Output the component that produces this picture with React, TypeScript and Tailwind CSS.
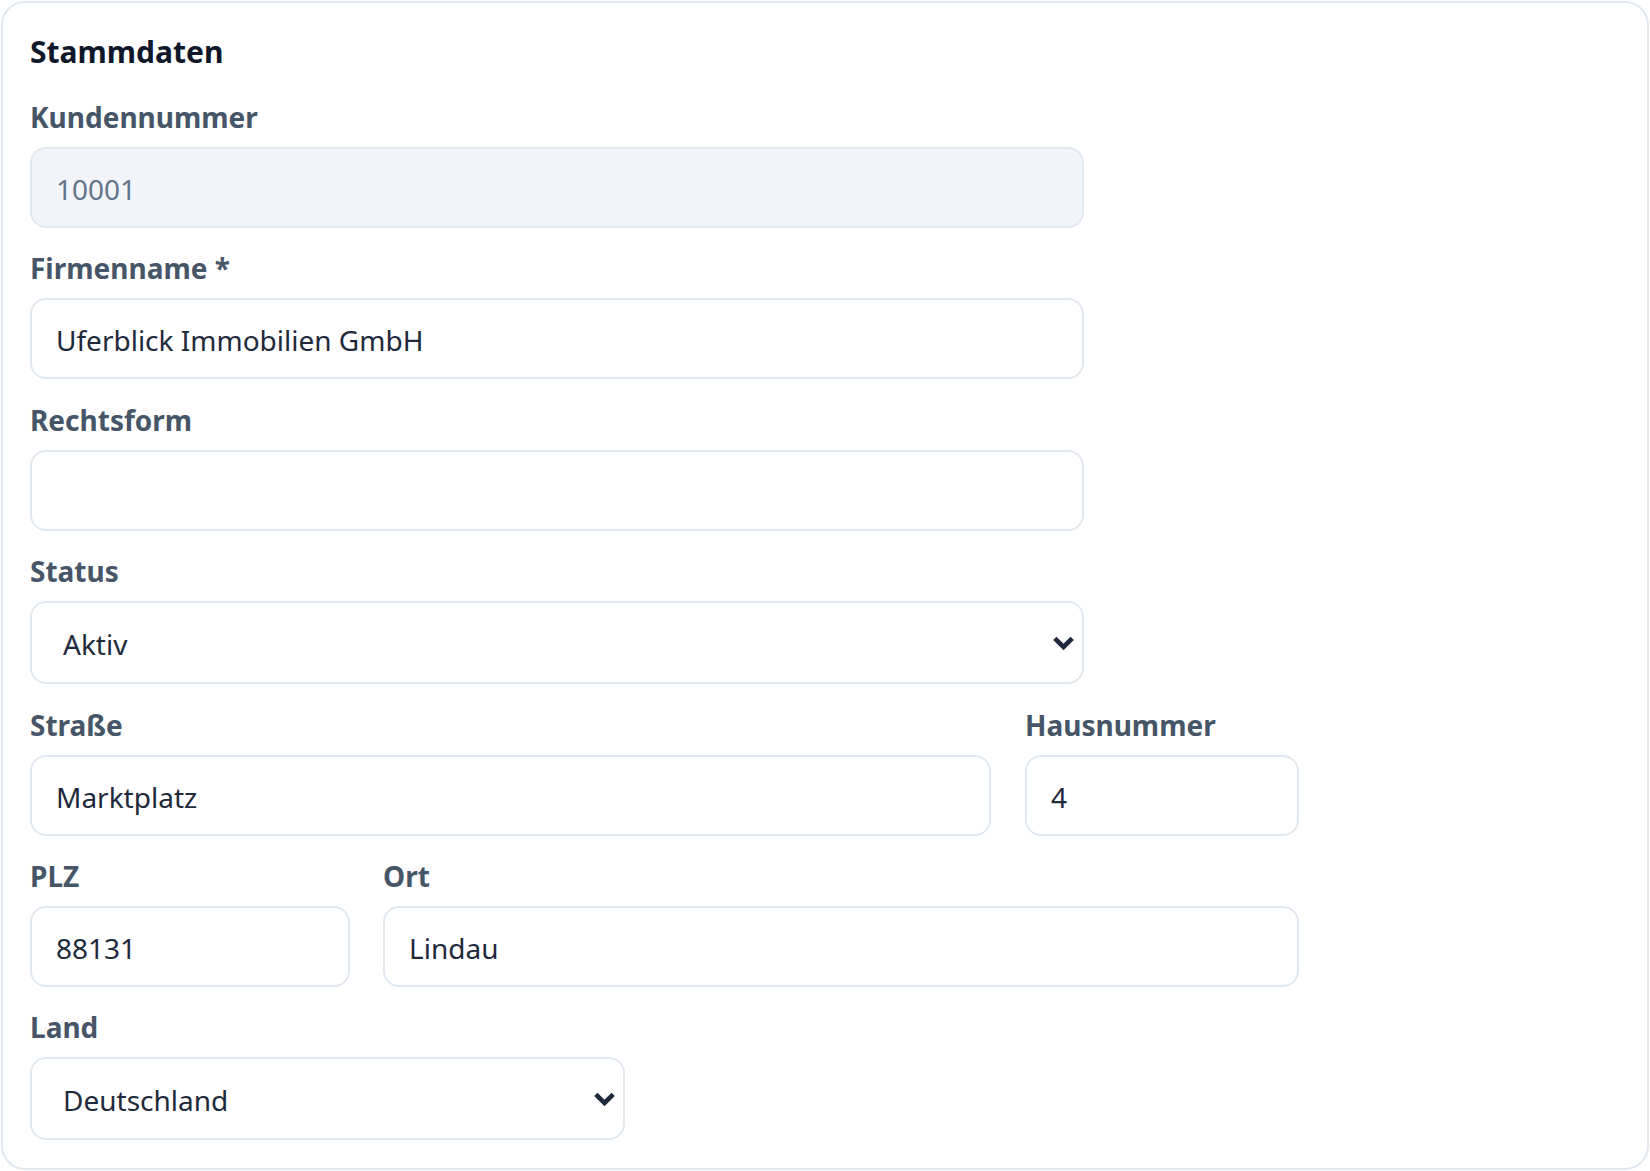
import { useState } from 'react';

type FieldProps = {
  label: string;
  children: React.ReactNode;
  className?: string;
};

function Field({ label, children, className = '' }: FieldProps) {
  return (
    <div className={`flex flex-col ${className}`}>
      <label className="mb-[9px] text-[28px] font-bold leading-[42px] text-[#475569]">{label}</label>
      {children}
    </div>
  );
}

const inputClass =
  'h-[81px] w-full rounded-[16px] border-2 border-[#e2e8f0] bg-white px-[24px] pt-[3px] text-[28px] text-[#1e293b] outline-none focus:border-[#94a3b8]';

function SelectBox({ value, options, onChange, className = '' }: {
  value: string;
  options: string[];
  onChange: (v: string) => void;
  className?: string;
}) {
  return (
    <div className={`relative ${className}`}>
      <select
        value={value}
        onChange={(e) => onChange(e.target.value)}
        className="h-[83px] w-full appearance-none rounded-[16px] border-2 border-[#e2e8f0] bg-white pl-[31px] pr-[48px] pt-[2px] text-[28px] text-[#1e293b] outline-none"
      >
        {options.map((o) => (
          <option key={o}>{o}</option>
        ))}
      </select>
      {/* chevron */}
      <svg
        className="pointer-events-none absolute right-[9px] top-1/2 -translate-y-1/2"
        width="23"
        height="15"
        viewBox="0 0 23 15"
        fill="none"
      >
        <path d="M2.8 2.8 L11.5 11.5 L20.2 2.8" stroke="#1e293b" strokeWidth="4.6" strokeLinejoin="miter" />
      </svg>
    </div>
  );
}

export default function App() {
  const [status, setStatus] = useState('Aktiv');
  const [land, setLand] = useState('Deutschland');

  return (
    <div className="bg-white p-px font-['Noto_Sans',sans-serif]">
      <div className="h-[1169px] w-[1648px] rounded-[24px] border-2 border-[#e2e8f0] bg-white pl-[27px] pt-[26px]">
        <h2 className="text-[30px] font-bold leading-[45px] text-[#0f172a]">Stammdaten</h2>

        <div className="mt-[22px] flex flex-col gap-[19.4px]">
          <Field label="Kundennummer" className="w-[1054px]">
            <input
              defaultValue="10001"
              disabled
              className={`${inputClass} !bg-[#f1f5f9] !text-[#64748b]`}
            />
          </Field>

          <Field label="Firmenname *" className="w-[1054px]">
            <input defaultValue="Uferblick Immobilien GmbH" className={inputClass} />
          </Field>

          <Field label="Rechtsform" className="w-[1054px]">
            <input defaultValue="" className={inputClass} />
          </Field>

          <Field label="Status" className="w-[1054px]">
            <SelectBox value={status} onChange={setStatus} options={['Aktiv', 'Inaktiv', 'Interessent']} />
          </Field>

          <div className="grid grid-cols-[961px_274px] gap-x-[34px]">
            <Field label="Straße">
              <input defaultValue="Marktplatz" className={inputClass} />
            </Field>
            <Field label="Hausnummer">
              <input defaultValue="4" className={inputClass} />
            </Field>
          </div>

          <div className="grid grid-cols-[320px_916px] gap-x-[33px]">
            <Field label="PLZ">
              <input defaultValue="88131" className={inputClass} />
            </Field>
            <Field label="Ort">
              <input defaultValue="Lindau" className={inputClass} />
            </Field>
          </div>

          <Field label="Land" className="w-[595px]">
            <SelectBox value={land} onChange={setLand} options={['Deutschland', 'Österreich', 'Schweiz']} />
          </Field>
        </div>
      </div>
    </div>
  );
}
